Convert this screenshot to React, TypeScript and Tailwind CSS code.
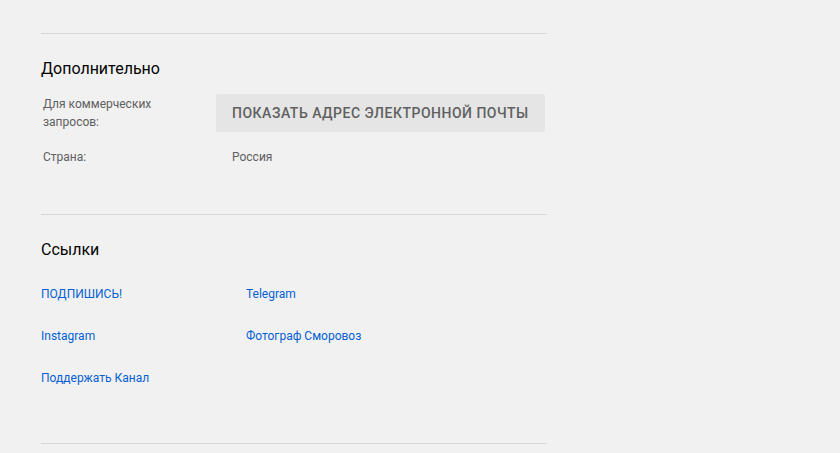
import React from "react";

const links = [
  "ПОДПИШИСЬ!",
  "Telegram",
  "Instagram",
  "Фотограф Сморовоз",
  "Поддержать Канал",
];

export default function App() {
  return (
    <div
      className="min-h-[453px] w-full bg-[#f1f1f1] pl-[41px] pt-[33px]"
      style={{ fontFamily: "Roboto, 'Noto Sans', sans-serif" }}
    >
      <div className="w-[506px]">
        <div className="h-px bg-[#d6d6d6]" />

        {/* Details */}
        <section className="pt-[24px] pb-[48px]">
          <h2 className="text-[16px] leading-[22px] text-[#030303]">Дополнительно</h2>
          <div className="mt-[14px] flex flex-col gap-[16px]">
            <div className="flex">
              <div className="w-[175px] pl-[2px] pr-4 pt-px text-[12px] leading-[18px] text-[#606060]">
                Для коммерческих
                <br />
                запросов:
              </div>
              <button className="flex h-[38px] w-[329px] items-center rounded-[2px] bg-[#e5e5e5] px-4 text-[14px] font-medium uppercase tracking-[0.5px] text-[#606060]">
                Показать адрес электронной почты
              </button>
            </div>
            <div className="flex">
              <div className="w-[175px] pl-[2px] text-[12px] leading-[18px] text-[#606060]">Страна:</div>
              <div className="pl-4 text-[12px] leading-[18px] text-[#606060]">Россия</div>
            </div>
          </div>
        </section>

        <div className="h-px bg-[#d6d6d6]" />

        {/* Links */}
        <section className="pt-[24px] pb-[56px]">
          <h2 className="text-[16px] leading-[22px] text-[#030303]">Ссылки</h2>
          <div className="mt-[24px] grid grid-cols-[205px_205px] gap-y-[24px]">
            {links.map((l) => (
              <a key={l} href="#" className="text-[12px] leading-[18px] text-[#065fd4]">
                {l}
              </a>
            ))}
          </div>
        </section>

        <div className="h-px bg-[#d6d6d6]" />
      </div>
    </div>
  );
}
